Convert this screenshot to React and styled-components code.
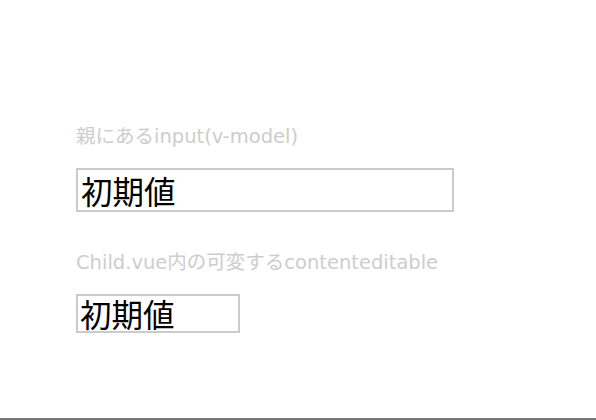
import styled, { createGlobalStyle } from "styled-components"

const GlobalStyle = createGlobalStyle`
  body {
    margin: 0;
    background: #fff;
    font-family: "Noto Sans CJK JP", "Noto Sans", sans-serif;
  }
`

const Page = styled.div`
  box-sizing: border-box;
  height: 420px;
  padding: 122px 0 0 76px;
  border-bottom: 2px solid #777;
`

const Field = styled.section`
  display: flex;
  flex-direction: column;
  align-items: flex-start;
  margin-bottom: 36px;
`

const Label = styled.p`
  margin: 0 0 16px;
  color: #cdcdcd;
  font-family: "DejaVu Sans", "Noto Sans CJK JP", sans-serif;
  font-size: 19.5px;
  line-height: 30px;
  letter-spacing: 0;
`

const TextInput = styled.input`
  box-sizing: border-box;
  width: 378px;
  height: 44px;
  margin: 0;
  padding: 0 3px;
  border: 2px solid #cbcbcb;
  font-family: "Noto Sans CJK JP", sans-serif;
  font-size: 31.5px;
  color: #000;
  outline: none;
`

const Editable = styled.div`
  box-sizing: border-box;
  width: 164px;
  height: 39px;
  padding: 0 2px;
  border: 2px solid #cbcbcb;
  font-size: 31.5px;
  line-height: 34px;
  color: #000;
  outline: none;
`

export default function App() {
  return (
    <>
      <GlobalStyle />
      <Page>
        <Field>
          <Label>親にあるinput(v-model)</Label>
          <TextInput defaultValue="初期値" />
        </Field>
        <Field>
          <Label>Child.vue内の可変するcontenteditable</Label>
          <Editable contentEditable suppressContentEditableWarning>初期値</Editable>
        </Field>
      </Page>
    </>
  )
}
